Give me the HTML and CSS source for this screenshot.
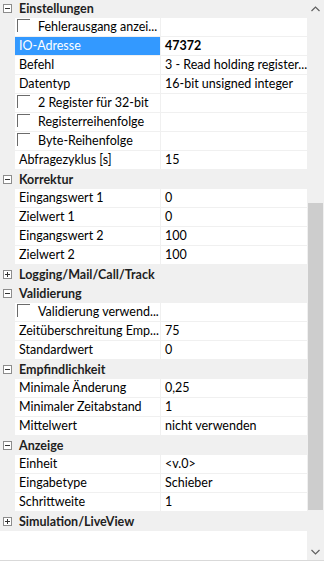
FILE: index.html
```html
<!DOCTYPE html>
<html lang="de">
<head>
<meta charset="utf-8">
<title>Eigenschaften</title>
<link rel="stylesheet" href="styles.css">
</head>
<body>
<div class="grid">
  <div class="rows">
    <div class="cat"><span class="tog minus"></span><span class="cat-name">Einstellungen</span></div>
    <div class="prop"><div class="name chk"><span class="box"></span>Fehlerausgang anzei...</div><div class="val"></div></div>
    <div class="prop sel"><div class="name">IO-Adresse</div><div class="val bold">47372</div></div>
    <div class="prop"><div class="name">Befehl</div><div class="val">3 - Read holding register...</div></div>
    <div class="prop"><div class="name">Datentyp</div><div class="val">16-bit unsigned integer</div></div>
    <div class="prop"><div class="name chk"><span class="box"></span>2 Register für 32-bit</div><div class="val"></div></div>
    <div class="prop"><div class="name chk"><span class="box"></span>Registerreihenfolge</div><div class="val"></div></div>
    <div class="prop"><div class="name chk"><span class="box"></span>Byte-Reihenfolge</div><div class="val"></div></div>
    <div class="prop"><div class="name">Abfragezyklus [s]</div><div class="val">15</div></div>

    <div class="cat"><span class="tog minus"></span><span class="cat-name">Korrektur</span></div>
    <div class="prop"><div class="name">Eingangswert 1</div><div class="val">0</div></div>
    <div class="prop"><div class="name">Zielwert 1</div><div class="val">0</div></div>
    <div class="prop"><div class="name">Eingangswert 2</div><div class="val">100</div></div>
    <div class="prop"><div class="name">Zielwert 2</div><div class="val">100</div></div>

    <div class="cat"><span class="tog plus"></span><span class="cat-name">Logging/Mail/Call/Track</span></div>

    <div class="cat"><span class="tog minus"></span><span class="cat-name">Validierung</span></div>
    <div class="prop"><div class="name chk"><span class="box"></span>Validierung verwend...</div><div class="val"></div></div>
    <div class="prop"><div class="name">Zeitüberschreitung Emp...</div><div class="val">75</div></div>
    <div class="prop"><div class="name">Standardwert</div><div class="val">0</div></div>

    <div class="cat"><span class="tog minus"></span><span class="cat-name">Empfindlichkeit</span></div>
    <div class="prop"><div class="name">Minimale Änderung</div><div class="val">0,25</div></div>
    <div class="prop"><div class="name">Minimaler Zeitabstand</div><div class="val">1</div></div>
    <div class="prop"><div class="name">Mittelwert</div><div class="val">nicht verwenden</div></div>

    <div class="cat"><span class="tog minus"></span><span class="cat-name">Anzeige</span></div>
    <div class="prop"><div class="name">Einheit</div><div class="val">&lt;v.0&gt;</div></div>
    <div class="prop"><div class="name">Eingabetype</div><div class="val">Schieber</div></div>
    <div class="prop"><div class="name">Schrittweite</div><div class="val">1</div></div>

    <div class="cat"><span class="tog plus"></span><span class="cat-name">Simulation/LiveView</span></div>
  </div>
  <div class="scrollbar">
    <div class="arrow">
      <svg width="9" height="6" viewBox="0 0 9 6"><path d="M0.5 5 L4.5 1 L8.5 5" fill="none" stroke="#606060" stroke-width="1.2"/></svg>
    </div>
    <div class="track"><div class="thumb"></div></div>
    <div class="arrow">
      <svg width="9" height="6" viewBox="0 0 9 6"><path d="M0.5 1 L4.5 5 L8.5 1" fill="none" stroke="#606060" stroke-width="1.2"/></svg>
    </div>
  </div>
</div>
</body>
</html>
```
FILE: styles.css
```css
* { box-sizing: border-box; }
html, body {
  margin: 0;
  padding: 0;
  background: #ffffff;
  width: 329px;
  height: 567px;
  overflow: hidden;
}
body {
  font-family: "Lato", "Noto Sans", sans-serif;
  font-size: 12.5px;
  color: #000;
}
.grid {
  display: flex;
  width: 324px;
  height: 561px;
  border-bottom: 1px solid #d9d9d9;
  overflow: hidden;
}
.rows {
  width: 307px;
  margin-top: -1px;
  display: flex;
  flex-direction: column;
}
.cat {
  height: 19px;
  background: #f0f0f0;
  display: flex;
  align-items: center;
  flex: none;
}
.tog {
  width: 9px;
  height: 9px;
  border: 1px solid #8c8c8c;
  margin-left: 3px;
  margin-right: 7px;
  position: relative;
  background: #fff;
  flex: none;
}
.tog::before {
  content: "";
  position: absolute;
  left: 1px;
  top: 3px;
  width: 5px;
  height: 1px;
  background: #333;
}
.tog.plus::after {
  content: "";
  position: absolute;
  left: 3px;
  top: 1px;
  width: 1px;
  height: 5px;
  background: #333;
}
.cat-name {
  font-weight: bold;
  color: #1e1e1e;
  line-height: 18px;
}
.prop {
  height: 19px;
  display: flex;
  background: #f0f0f0;
  padding-left: 15px;
  flex: none;
}
.name {
  width: 145px;
  height: 18px;
  background: #fff;
  padding-left: 4px;
  line-height: 18px;
  white-space: nowrap;
  overflow: hidden;
  margin-right: 1px;
  display: flex;
  align-items: center;
}
.name.chk {
  padding-left: 2px;
}
.box {
  width: 13px;
  height: 13px;
  border-top: 1px solid #6b6b6b;
  border-left: 1px solid #6b6b6b;
  margin-right: 8px;
  align-self: flex-start;
  margin-top: 1px;
  flex: none;
}
.val {
  flex: 1;
  height: 18px;
  background: #fff;
  padding-left: 4px;
  line-height: 18px;
  white-space: nowrap;
  overflow: hidden;
}
.val.bold { font-weight: bold; }
.sel .name {
  background: #3399ff;
  color: #fff;
}
.scrollbar {
  width: 17px;
  background: #f0f0f0;
  display: flex;
  flex-direction: column;
}
.arrow {
  height: 17px;
  display: flex;
  align-items: center;
  justify-content: center;
  flex: none;
}
.track {
  flex: 1;
  padding-top: 186px;
  padding-left: 1px;
  padding-right: 1px;
}
.thumb {
  height: 307px;
  background: #cdcdcd;
}
```
